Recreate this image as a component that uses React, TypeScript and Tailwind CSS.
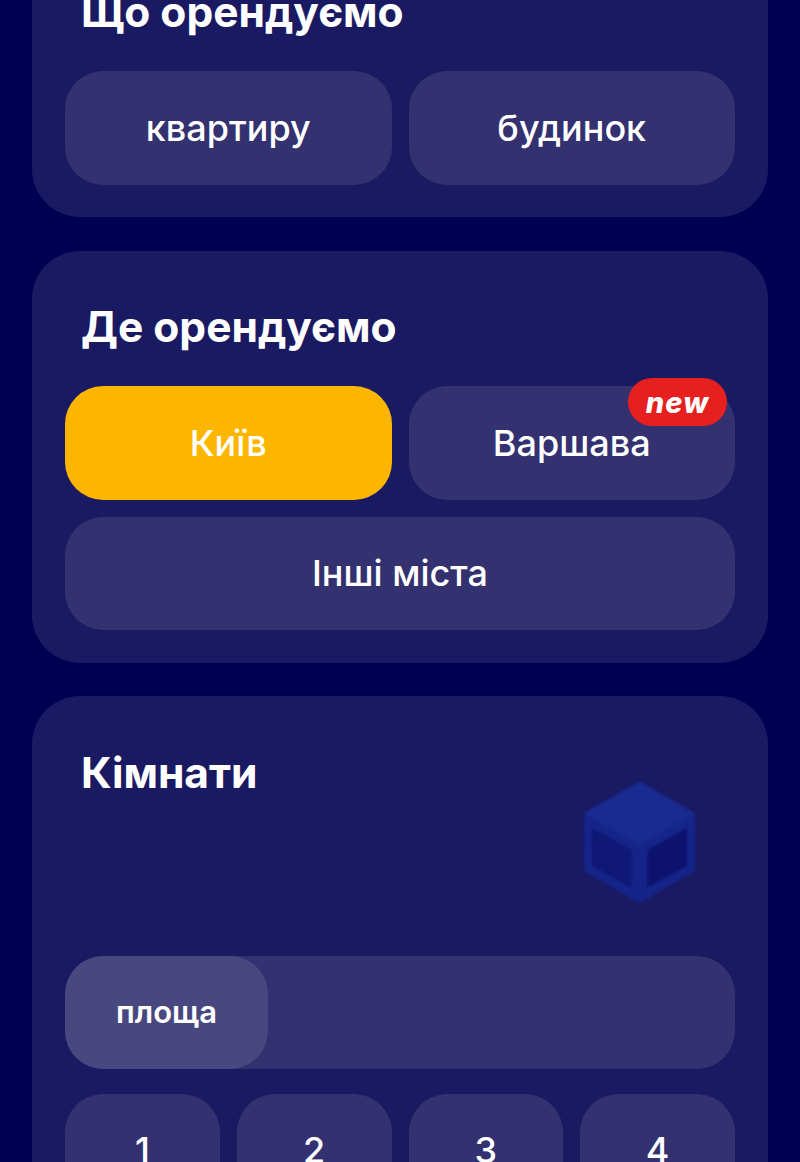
const Btn = ({ children, className = "" }: { children: React.ReactNode; className?: string }) => (
  <div className={`relative flex h-[113.5px] items-center justify-center rounded-[38px] text-[36px] font-medium text-white ${className || "bg-[#33316f]"}`}>
    {children}
  </div>
);

const Title = ({ children }: { children: React.ReactNode }) => (
  <h2 className="pl-[16px] text-[42.5px] leading-[48px] font-bold text-white">{children}</h2>
);

const Cube = () => (
  <svg width="111" height="124" viewBox="0 0 112 124" className="mt-[32px] mr-[40px] blur-[1px]">
    <path d="M56 0L112 32V90L56 123L0 90V32Z" fill="#152488" />
    <path d="M56 0L112 32L56 64L0 32Z" fill="#192b90" />
    <path d="M8 47L48 69V107L8 85Z" fill="#0f1874" />
    <path d="M64 69L104 47V85L64 107Z" fill="#0d126e" />
  </svg>
);

export default function App() {
  return (
    <div className="h-[1162px] overflow-hidden bg-[#000052] [font-family:Inter,'Noto_Sans',sans-serif]">
      <div className="-mt-[64.5px] flex flex-col gap-[33.5px] px-[32px]">
        <section className="rounded-[48px] bg-[#1a1a63] px-[33px] pt-[52.5px] pb-[32.5px]">
          <div className="mb-[35px]"><Title>Що орендуємо</Title></div>
          <div className="grid grid-cols-2 gap-[17px]">
            <Btn>квартиру</Btn>
            <Btn>будинок</Btn>
          </div>
        </section>
        <section className="rounded-[48px] bg-[#1a1a63] px-[33px] pt-[52.5px] pb-[32.5px]">
          <div className="mb-[35px]"><Title>Де орендуємо</Title></div>
          <div className="grid grid-cols-2 gap-[17px]">
            <Btn className="bg-[#fdb600]">Київ</Btn>
            <Btn>
              Варшава
              <span className="absolute -top-[8px] right-[8px] flex h-[48px] w-[99px] items-center justify-center rounded-full bg-[#e5201f] text-[29px] leading-none font-extrabold tracking-[1px] italic">
                new
              </span>
            </Btn>
            <Btn className="col-span-2 bg-[#33316f]">Інші міста</Btn>
          </div>
        </section>
        <section className="rounded-[48px] bg-[#1a1a63] px-[33px] pt-[52.5px] pb-[32.5px]">
          <div className="flex h-[207px] items-start justify-between">
            <Title>Кімнати</Title>
            <Cube />
          </div>
          <div className="flex h-[113.5px] rounded-[38px] bg-[#33316f]">
            <div className="flex w-[203px] items-center justify-center rounded-[38px] bg-[#484780] text-[31px] font-semibold text-white">
              площа
            </div>
          </div>
          <div className="mt-[24.5px] grid grid-cols-4 gap-[17px]">
            <Btn>1</Btn>
            <Btn>2</Btn>
            <Btn>3</Btn>
            <Btn>4</Btn>
          </div>
        </section>
      </div>
    </div>
  );
}
